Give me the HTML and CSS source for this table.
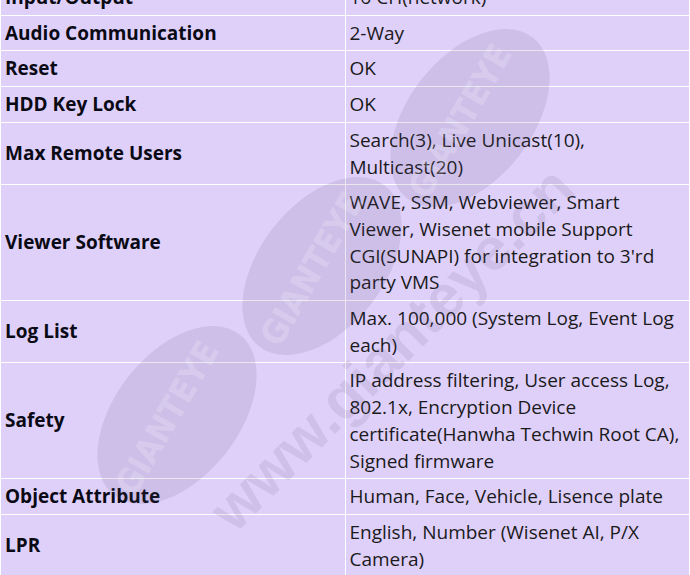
FILE: index.html
```html
<!DOCTYPE html>
<html lang="en">
<head>
    <meta charset="UTF-8">
    <title>Specifications</title>
    <link rel="stylesheet" href="styles.css">
</head>
<body>
    <div class="page">
        <table class="spec">
            <tr><th>Input/Output</th><td>16 CH(network)</td></tr>
            <tr><th>Audio Communication</th><td>2-Way</td></tr>
            <tr><th>Reset</th><td>OK</td></tr>
            <tr><th>HDD Key Lock</th><td>OK</td></tr>
            <tr><th>Max Remote Users</th><td>Search(3), Live Unicast(10), Multicast(20)</td></tr>
            <tr><th>Viewer Software</th><td>WAVE, SSM, Webviewer, Smart Viewer, Wisenet mobile Support CGI(SUNAPI) for integration to 3'rd party VMS</td></tr>
            <tr><th>Log List</th><td>Max. 100,000 (System Log, Event Log each)</td></tr>
            <tr><th>Safety</th><td>IP address filtering, User access Log, 802.1x, Encryption Device certificate(Hanwha Techwin Root CA), Signed firmware</td></tr>
            <tr><th>Object Attribute</th><td>Human, Face, Vehicle, Lisence plate</td></tr>
            <tr><th>LPR</th><td>English, Number (Wisenet AI, P/X Camera)</td></tr>
        </table>

        <svg class="watermark" viewBox="0 0 690 575" width="690" height="575" aria-hidden="true">
            <g class="wm-oval">
                <ellipse cx="470" cy="118" rx="102" ry="62" transform="rotate(-52 470 118)"/>
                <ellipse cx="322" cy="266" rx="102" ry="62" transform="rotate(-52 322 266)"/>
                <ellipse cx="177" cy="415" rx="102" ry="62" transform="rotate(-52 177 415)"/>
            </g>
            <g class="wm-name">
                <text x="462" y="122" transform="rotate(-60 462 122)">GIANTEYE</text>
                <text x="314" y="270" transform="rotate(-60 314 270)">GIANTEYE</text>
                <text x="169" y="419" transform="rotate(-60 169 419)">GIANTEYE</text>
            </g>
            <text class="wm-url" x="395" y="352" transform="rotate(-45 395 352)">www.gianteye.cn</text>
        </svg>
    </div>
</body>
</html>
```

FILE: styles.css
```css
body {
    margin: 0;
    background: #dfd0fa;
    font-family: "Open Sans", "Noto Sans", sans-serif;
    color: #111;
    overflow: hidden;
}
.page {
    position: relative;
    width: 690px;
    height: 575px;
    overflow: hidden;
}
.spec {
    width: 690px;
    margin-top: -21px;
    border-collapse: collapse;
    table-layout: fixed;
    background: #dfd0fa;
    font-size: 19px;
    line-height: 26.7px;
}
.spec th,
.spec td {
    width: 50%;
    padding: 4px 4px;
    border: 1px solid #fff;
    text-align: left;
}
.spec th {
    font-weight: bold;
    vertical-align: middle;
    color: #0a0a14;
}
.spec td {
    vertical-align: top;
    color: #1a1a1a;
}
.watermark {
    position: absolute;
    top: 0;
    left: 0;
    pointer-events: none;
}
.wm-oval {
    fill: rgba(95, 80, 120, 0.13);
}
.wm-name text {
    fill: rgba(255, 255, 255, 0.2);
    font-family: "Liberation Sans Narrow", "DejaVu Sans Condensed", sans-serif;
    font-weight: bold;
    font-size: 34px;
    text-anchor: middle;
    dominant-baseline: middle;
}
.wm-url {
    fill: rgba(95, 80, 120, 0.12);
    font-family: "Liberation Sans", sans-serif;
    font-weight: bold;
    font-size: 60px;
    text-anchor: middle;
    dominant-baseline: middle;
}
```
